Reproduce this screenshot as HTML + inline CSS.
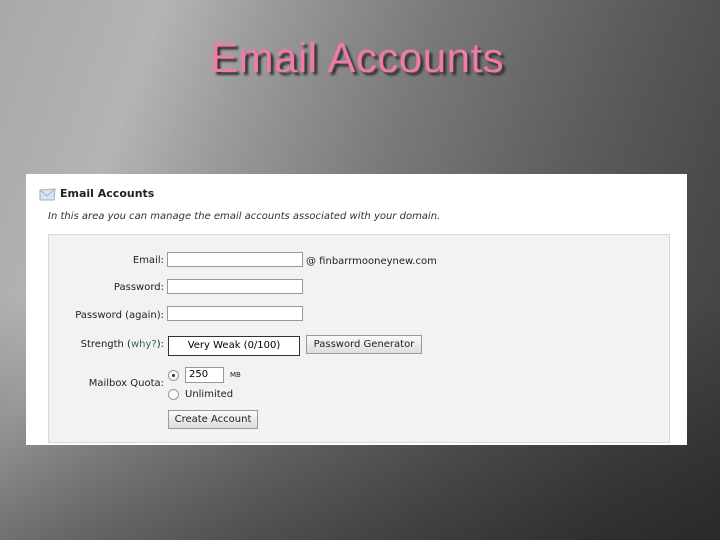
<!DOCTYPE html>
<html><head><style>
body{margin:0;width:720px;height:540px;overflow:hidden;position:relative;font-family:"DejaVu Sans","Liberation Sans",sans-serif;
background:linear-gradient(180deg,rgba(0,0,0,0) 0%,rgba(0,0,0,0) 55%,rgba(0,0,0,0.35) 100%),linear-gradient(110deg,#a8a8a8 0%,#b4b4b4 18%,#9a9a9a 30%,#7a7a7a 48%,#5e5e5e 68%,#4a4a4a 85%,#3e3e3e 100%);}
.title{position:absolute;left:210px;top:34px;font-family:"Liberation Sans",sans-serif;font-size:42px;color:#f07aa8;text-shadow:3px 3px 2px #333;letter-spacing:0.5px}
.shot{position:absolute;left:26px;top:174px;width:661px;height:271px;background:#fff}
.hd{position:absolute;left:34px;top:13px;font-size:11px;font-weight:bold;color:#222}
.desc{position:absolute;left:22px;top:37px;font-size:10px;font-style:italic;color:#333}
.box{position:absolute;left:22px;top:60px;width:620px;height:207px;background:#f2f2f2;border:1px solid #d8d8d8}
.l{position:absolute;font-size:10px;color:#222;text-align:right;width:120px}
.in{position:absolute;background:#fff;border:1px solid #999;height:15px;box-sizing:border-box}
.btn{position:absolute;background:linear-gradient(#fafafa,#ddd);border:1px solid #999;font-size:10px;color:#222;text-align:center;box-sizing:border-box}
.t{position:absolute;font-size:10px;color:#222}
.r{position:absolute;width:11px;height:11px;border-radius:50%;border:1px solid #999;background:#fafafa;box-sizing:border-box}
</style></head><body>
<div class="title">Email Accounts</div>
<div class="shot">
<svg style="position:absolute;left:13px;top:14px" width="17" height="13" viewBox="0 0 17 13"><path d="M1 2 L16 1 L15 12 L1 12 Z" fill="#dbe4ee" stroke="#9fb0c3"/><path d="M1 2 L8 8 L16 1" fill="none" stroke="#9fb0c3"/></svg>
<div class="hd">Email Accounts</div>
<div class="desc">In this area you can manage the email accounts associated with your domain.</div>
<div class="box">
<div class="l" style="left:-5px;top:20px">Email:</div>
<div class="in" style="left:118px;top:17px;width:136px"></div>
<div class="t" style="left:257px;top:21px">@ finbarrmooneynew.com</div>
<div class="l" style="left:-5px;top:47px">Password:</div>
<div class="in" style="left:118px;top:44px;width:136px"></div>
<div class="l" style="left:-5px;top:75px">Password (again):</div>
<div class="in" style="left:118px;top:71px;width:136px"></div>
<div class="l" style="left:-5px;top:104px">Strength (<span style="color:#366">why?</span>):</div>
<div class="in" style="left:119px;top:101px;width:132px;height:20px;border-color:#333;font-size:10px;text-align:center;line-height:18px">Very Weak (0/100)</div>
<div class="btn" style="left:257px;top:100px;width:116px;height:19px;line-height:17px">Password Generator</div>
<div class="l" style="left:-5px;top:143px">Mailbox Quota:</div>
<div class="r" style="left:119px;top:135px"><div style="width:3px;height:3px;background:#236;border-radius:50%;margin:3px"></div></div>
<div class="in" style="left:136px;top:132px;width:39px;height:16px;font-size:10px;padding-left:3px;line-height:14px">250</div>
<div class="t" style="left:181px;top:136px;font-size:7px">MB</div>
<div class="r" style="left:119px;top:154px"></div>
<div class="t" style="left:136px;top:154px">Unlimited</div>
<div class="btn" style="left:119px;top:175px;width:90px;height:19px;line-height:17px">Create Account</div>
</div>
</div>
</body></html>
